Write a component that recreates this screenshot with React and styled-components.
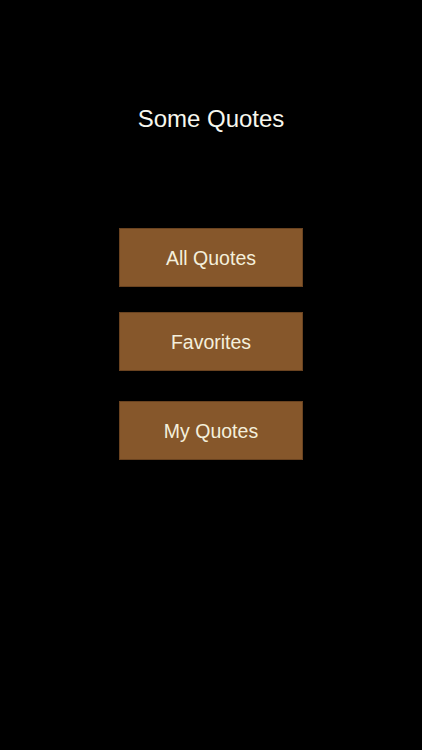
import styled, { createGlobalStyle } from "styled-components";

const GlobalStyle = createGlobalStyle`
  html, body {
    margin: 0;
    padding: 0;
    background: #000;
  }
  body {
    font-family: "Liberation Sans", Arial, sans-serif;
  }
`;

const Screen = styled.div`
  width: 422px;
  height: 750px;
  background: #000;
  display: flex;
  flex-direction: column;
  align-items: center;
`;

const Title = styled.h1`
  margin: 105px 0 0;
  font-size: 24px;
  font-weight: 400;
  line-height: 28px;
  color: #f7f7ee;
`;

const Menu = styled.nav`
  display: flex;
  flex-direction: column;
  align-items: center;
  margin-top: 95px;
`;

const MenuButton = styled.button`
  width: 184px;
  height: 59px;
  margin-top: ${(p) => p.$gap || 0}px;
  padding: 2px 0 0;
  background: #86572b;
  border: 1px solid #6a4320;
  color: #f4efdc;
  font-family: "Liberation Sans", Arial, sans-serif;
  font-size: 19.5px;
  cursor: pointer;
`;

const items = [
  { label: "All Quotes", gap: 0 },
  { label: "Favorites", gap: 25 },
  { label: "My Quotes", gap: 30 },
];

export default function App() {
  return (
    <Screen>
      <GlobalStyle />
      <Title>Some Quotes</Title>
      <Menu>
        {items.map((item) => (
          <MenuButton key={item.label} $gap={item.gap}>
            {item.label}
          </MenuButton>
        ))}
      </Menu>
    </Screen>
  );
}
